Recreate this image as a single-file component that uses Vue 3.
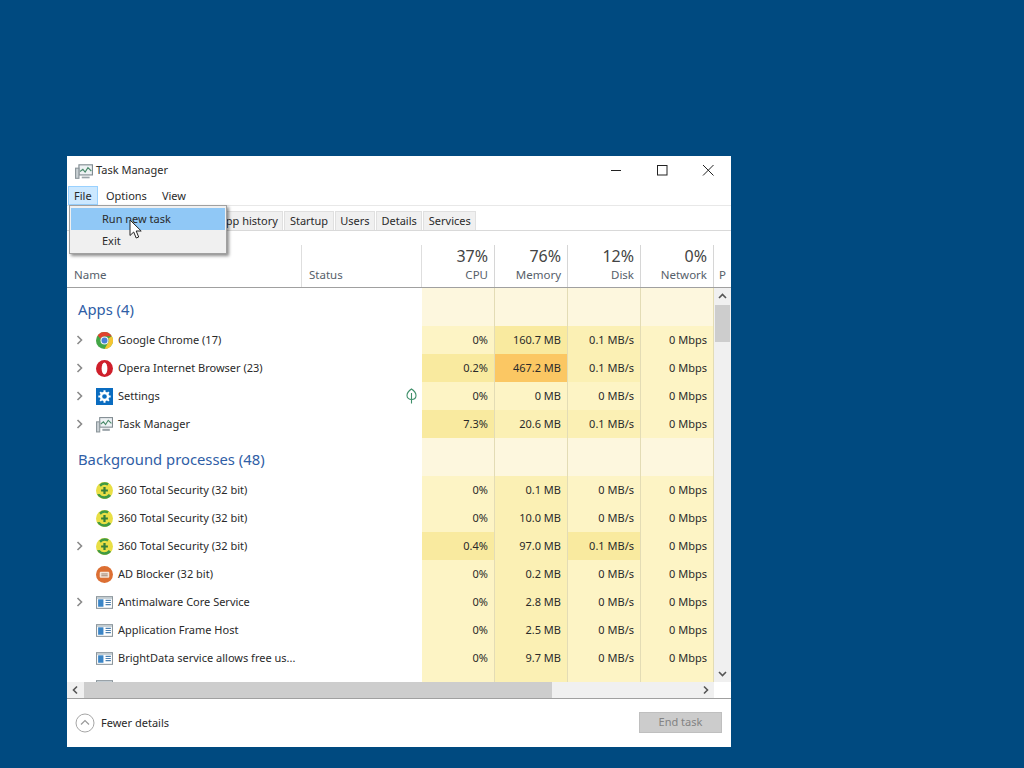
<script setup>
const tabs = ['Processes', 'Performance', 'App history', 'Startup', 'Users', 'Details', 'Services']
const heads = [
  { pct: '37%', label: 'CPU' },
  { pct: '76%', label: 'Memory' },
  { pct: '12%', label: 'Disk' },
  { pct: '0%', label: 'Network' },
]
const groups = [
  {
    title: 'Apps (4)',
    rows: [
      { name: 'Google Chrome (17)', icon: 'chrome', exp: true, cells: [['0%', 0], ['160.7 MB', 2], ['0.1 MB/s', 1], ['0 Mbps', 0]] },
      { name: 'Opera Internet Browser (23)', icon: 'opera', exp: true, cells: [['0.2%', 2], ['467.2 MB', 3], ['0.1 MB/s', 1], ['0 Mbps', 0]] },
      { name: 'Settings', icon: 'gear', exp: true, leaf: true, cells: [['0%', 0], ['0 MB', 0], ['0 MB/s', 0], ['0 Mbps', 0]] },
      { name: 'Task Manager', icon: 'tm', exp: true, cells: [['7.3%', 2], ['20.6 MB', 1], ['0.1 MB/s', 1], ['0 Mbps', 0]] },
    ],
  },
  {
    title: 'Background processes (48)',
    rows: [
      { name: '360 Total Security (32 bit)', icon: 's360', cells: [['0%', 0], ['0.1 MB', 1], ['0 MB/s', 0], ['0 Mbps', 0]] },
      { name: '360 Total Security (32 bit)', icon: 's360', cells: [['0%', 0], ['10.0 MB', 1], ['0 MB/s', 0], ['0 Mbps', 0]] },
      { name: '360 Total Security (32 bit)', icon: 's360', exp: true, cells: [['0.4%', 2], ['97.0 MB', 1], ['0.1 MB/s', 2], ['0 Mbps', 0]] },
      { name: 'AD Blocker (32 bit)', icon: 'ad', cells: [['0%', 0], ['0.2 MB', 1], ['0 MB/s', 0], ['0 Mbps', 0]] },
      { name: 'Antimalware Core Service', icon: 'win', exp: true, cells: [['0%', 0], ['2.8 MB', 1], ['0 MB/s', 0], ['0 Mbps', 0]] },
      { name: 'Application Frame Host', icon: 'win', cells: [['0%', 0], ['2.5 MB', 1], ['0 MB/s', 0], ['0 Mbps', 0]] },
      { name: 'BrightData service allows free us...', icon: 'win', cells: [['0%', 0], ['9.7 MB', 1], ['0 MB/s', 0], ['0 Mbps', 0]] },
      { name: '', icon: 'win', cells: [['', 0], ['', 1], ['', 0], ['', 0]] },
    ],
  },
]
</script>

<template>
  <div class="desktop">
    <div class="window">
      <div class="titlebar">
        <svg class="tm-title" width="18" height="16" viewBox="0 0 16 14">
          <rect x="3.500" y="1.500" width="12" height="9" fill="#eef2f4" stroke="#7f8a90" />
          <path d="M4.500 7.500l2.500-2 2 2.500 2.500-4 3 3" fill="none" stroke="#4a8a6a" />
          <rect x="0.500" y="4.500" width="3" height="9" fill="#c9d0d4" stroke="#8c969b" />
          <path d="M6 12h7v1.500H6z" fill="#9aa3a8" />
        </svg>
        <span class="title">Task Manager</span>
        <div class="caption">
          <svg width="46" height="30" viewBox="0 0 46 30"><path d="M18 14.500h10" stroke="#222" /></svg>
          <svg width="46" height="30" viewBox="0 0 46 30"><rect x="18.500" y="9.500" width="9.500" height="9.500" fill="none" stroke="#222" /></svg>
          <svg width="46" height="30" viewBox="0 0 46 30"><path d="M18 9l10.500 10.500M28.500 9L18 19.500" stroke="#222" fill="none" /></svg>
        </div>
      </div>

      <div class="menubar">
        <span class="menu active">File</span>
        <span class="menu">Options</span>
        <span class="menu">View</span>
      </div>

      <div class="tabs">
        <span v-for="t in tabs" :key="t" class="tab">{{ t }}</span>
      </div>

      <div class="head">
        <div class="hcell name"><span class="hlabel">Name</span></div>
        <div class="hcell status"><span class="hlabel">Status</span></div>
        <div v-for="h in heads" :key="h.label" class="hcell metric">
          <span class="pct">{{ h.pct }}</span>
          <span class="hlabel">{{ h.label }}</span>
        </div>
        <div class="hcell power"><span class="hlabel">P</span></div>
      </div>

      <div class="body">
        <div class="list">
          <div class="row spacer">
            <div></div>
            <div></div>
            <div v-for="i in 4" :key="i" class="cell hg"></div>
          </div>
          <template v-for="g in groups" :key="g.title">
            <div class="row group">
              <div class="gtitle">{{ g.title }}</div>
              <div class="status-cell"></div>
              <div v-for="i in 4" :key="i" class="cell hg"></div>
            </div>
            <div v-for="(r, ri) in g.rows" :key="ri" class="row">
              <div class="namecell">
                <svg v-if="r.exp" class="chev" width="7" height="10" viewBox="0 0 7 10"><path d="M1.500 1l4 4-4 4" fill="none" stroke="#8a8a8a" stroke-width="1.600" /></svg>
                <svg class="ico" width="17" height="17" viewBox="0 0 16 16">
                  <template v-if="r.icon === 'chrome'">
                    <circle cx="8" cy="8" r="8" fill="#43a647" />
                    <path d="M8 0a8 8 0 0 1 6.930 4H8a4 4 0 0 0-3.700 2.400L1.600 3.200A8 8 0 0 1 8 0z" fill="#e0432f" />
                    <path d="M14.930 4A8 8 0 0 1 8 16l3.400-5.900A4 4 0 0 0 11.500 6L14.930 4z" fill="#f6c531" />
                    <circle cx="8" cy="8" r="3.800" fill="#f4f4f4" />
                    <circle cx="8" cy="8" r="2.800" fill="#4a80d8" />
                  </template>
                  <template v-else-if="r.icon === 'opera'">
                    <circle cx="8" cy="8" r="8" fill="#cf1f2b" />
                    <ellipse cx="8" cy="8" rx="2.700" ry="5.600" fill="#fff" />
                  </template>
                  <template v-else-if="r.icon === 'gear'">
                    <rect width="16" height="16" fill="#0a6cc0" />
                    <circle cx="8" cy="8" r="3.300" fill="none" stroke="#fff" stroke-width="2.200" />
                    <path d="M8 2.200v2.500M8 11.300v2.500M2.200 8h2.500M11.300 8h2.500M3.900 3.900l1.700 1.700M10.400 10.400l1.700 1.700M12.100 3.900l-1.700 1.700M5.600 10.400l-1.700 1.700" stroke="#fff" stroke-width="1.900" />
                  </template>
                  <template v-else-if="r.icon === 'tm'">
                    <rect x="3.500" y="1.500" width="12" height="9" fill="#eef2f4" stroke="#7f8a90" />
                    <path d="M4.500 7.500l2.500-2 2 2.500 2.500-4 3 3" fill="none" stroke="#4a8a6a" />
                    <rect x="0.500" y="5.500" width="3" height="9.500" fill="#c9d0d4" stroke="#8c969b" />
                    <path d="M6 12h7v2H6z" fill="#9aa3a8" />
                  </template>
                  <template v-else-if="r.icon === 's360'">
                    <circle cx="8" cy="8" r="8" fill="#e9df45" />
                    <path d="M1 11.500a8 8 0 0 0 13.200 1.500L12 11.200a5.200 5.200 0 0 1-8.600 0z" fill="#3f9a45" />
                    <path d="M3 2.500A8 8 0 0 1 12 1.200L10.800 3.400A5 5 0 0 0 4.500 4.500z" fill="#3f9a45" />
                    <path d="M8 4.800v6.400M4.800 8h6.400" stroke="#357f39" stroke-width="2.100" />
                  </template>
                  <template v-else-if="r.icon === 'ad'">
                    <circle cx="8" cy="8" r="8" fill="#dc6f33" />
                    <rect x="3.500" y="5.500" width="9" height="5.500" rx="1" fill="#f3e4d8" />
                    <path d="M5 7.500h6M5 9.200h6" stroke="#9a8070" stroke-width="0.900" />
                  </template>
                  <template v-else>
                    <rect x="0.500" y="2.500" width="15" height="11" fill="#fff" stroke="#8b969c" />
                    <rect x="1" y="3" width="14" height="1.500" fill="#b9c4ca" />
                    <rect x="2" y="5" width="5" height="7" fill="#3b85c6" />
                    <path d="M9 6h5M9 8h5M9 10h5" stroke="#4a7fb0" />
                  </template>
                </svg>
                <span class="pname">{{ r.name }}</span>
              </div>
              <div class="status-cell">
                <svg v-if="r.leaf" class="leaf" width="11" height="16" viewBox="0 0 11 16"><path d="M5.500 1C8.500 3 10 5.500 10 7.500 10 10 8 11.500 5.500 11.500S1 10 1 7.500C1 5.500 2.500 3 5.500 1zM5.500 5v10.500" fill="none" stroke="#3f8f6a" stroke-width="1.100" /></svg>
              </div>
              <div v-for="(c, ci) in r.cells" :key="ci" class="cell" :class="'h' + c[1]">{{ c[0] }}</div>
            </div>
          </template>
        </div>
        <div class="vscroll">
          <svg width="17" height="17" viewBox="0 0 17 17"><path d="M5 10l3.500-3.500 3.500 3.500" fill="none" stroke="#555" stroke-width="1.600" /></svg>
          <div class="vthumb"></div>
          <div class="vspace"></div>
          <svg width="17" height="17" viewBox="0 0 17 17"><path d="M5 7l3.500 3.500 3.500-3.500" fill="none" stroke="#555" stroke-width="1.600" /></svg>
        </div>
      </div>

      <div class="hscroll">
        <svg width="17" height="16" viewBox="0 0 17 16"><path d="M10 4.500L6.500 8l3.500 3.500" fill="none" stroke="#555" stroke-width="1.600" /></svg>
        <div class="hthumb"></div>
        <div class="hspace"></div>
        <svg width="17" height="16" viewBox="0 0 17 16"><path d="M7 4.500L10.500 8 7 11.500" fill="none" stroke="#555" stroke-width="1.600" /></svg>
        <div class="hcorner"></div>
      </div>

      <div class="footer">
        <svg width="20" height="20" viewBox="0 0 20 20"><circle cx="10" cy="10" r="9" fill="none" stroke="#a6a6a6" /><path d="M6 11.500l4-4 4 4" fill="none" stroke="#9a9a9a" stroke-width="1.200" /></svg>
        <span class="fewer">Fewer details</span>
        <span class="endtask">End task</span>
      </div>

      <div class="dropdown">
        <div class="ditem on">Run new task</div>
        <div class="ditem">Exit</div>
      </div>
    </div>

    <svg class="cursor" width="14" height="21" viewBox="0 0 14 21"><path d="M1 1v15.500l3.700-3.500 2.500 6 2.500-1-2.500-6h5z" fill="#fff" stroke="#222" stroke-width="1" stroke-linejoin="round" /></svg>
  </div>
</template>

<style>
html, body { margin: 0; padding: 0; }
</style>

<style scoped>
.desktop {
  position: relative;
  width: 1024px;
  height: 768px;
  background: #004a80;
  overflow: hidden;
  font-family: "Noto Sans", "Open Sans", sans-serif;
  font-size: 11px;
  color: #2a2a2a;
}
.window {
  position: absolute;
  left: 67px;
  top: 156px;
  width: 664px;
  height: 591px;
  background: #fff;
  display: flex;
  flex-direction: column;
}
.titlebar {
  height: 30px;
  display: flex;
  align-items: center;
  padding-left: 8px;
  flex: none;
}
.tm-title { margin-right: 3px; }
.title { flex: 1; line-height: 28px; padding-bottom: 2px; }
.caption { display: flex; }
.caption svg { display: block; }
.menubar {
  height: 19px;
  display: flex;
  padding-left: 1px;
  flex: none;
}
.menu {
  padding: 0 6px 0 7px;
  line-height: 18px;
  box-sizing: border-box;
  border: 1px solid transparent;
}
.menu.active { background: #cce8ff; border-color: #99d1ff; padding: 0 0 0 5px; width: 30px; }
.tabs {
  height: 25px;
  display: flex;
  align-items: flex-end;
  padding-left: 4px;
  border-bottom: 1px solid #d9d9d9;
  box-shadow: inset 0 1px 0 #e8e8e8;
  flex: none;
}
.tab {
  height: 19px;
  line-height: 17px;
  padding: 0 4.500px;
  background: #f0f0f0;
  border: 1px solid #e0e0e0;
  border-bottom: 0;
  margin-right: 1px;
  box-sizing: border-box;
}
.head {
  height: 56px;
  display: grid;
  grid-template-columns: 235px 120px repeat(4, 73px) 17px;
  border-bottom: 1px solid #a0a0a0;
  flex: none;
  overflow: hidden;
}
.hcell {
  display: flex;
  flex-direction: column;
  justify-content: flex-end;
  padding: 0 6px 4px 7px;
  box-sizing: border-box;
  border-right: 1px solid #dedede;
  margin-top: 14px;
  white-space: nowrap;
}
.hcell.metric { align-items: flex-end; border-right: 1px solid #d6d6d6; }
.hcell.power { border-right: 0; padding-left: 5px; padding-right: 0; }
.hlabel { color: #56606a; line-height: 16px; font-size: 11.500px; }
.pct { font-size: 16px; line-height: 22px; color: #444; }
.body {
  height: 394px;
  flex: none;
  display: flex;
  overflow: hidden;
}
.list { width: 647px; flex: none; }
.row {
  display: grid;
  grid-template-columns: 235px 120px repeat(4, 73px);
  height: 28px;
}
.row.spacer { height: 8px; }
.row.group { height: 30px; }
.row + .row.group { height: 38px; }
.row.spacer + .row.group { height: 30px; }
.gtitle {
  font-size: 14.800px;
  color: #2f5ea6;
  padding-left: 11px;
  align-self: end;
  line-height: 27px;
  padding-bottom: 3px;
  white-space: nowrap;
}
.namecell {
  position: relative;
  display: flex;
  align-items: center;
  padding-left: 29px;
  white-space: nowrap;
}
.chev { position: absolute; left: 9px; top: 9px; }
.ico { flex: none; margin-right: 5px; }
.pname { line-height: 28px; }
.status-cell { display: flex; align-items: center; justify-content: flex-end; padding-right: 5px; }
.cell {
  line-height: 28px;
  text-align: right;
  padding-right: 6px;
  border-right: 1px solid #e3dcb5;
  box-sizing: border-box;
  white-space: nowrap;
}
.hg { background: #fdf7de; }
.h0 { background: #fdf4c5; }
.h1 { background: #fbf0b4; }
.h2 { background: #f9ea9f; }
.h3 { background: #fbc763; }
.vscroll {
  width: 17px;
  flex: none;
  background: #f0f0f0;
  display: flex;
  flex-direction: column;
}
.vscroll svg { display: block; flex: none; }
.vthumb { height: 37px; background: #cdcdcd; flex: none; margin: 0 1px; }
.vspace { flex: 1; }
.hscroll {
  height: 16px;
  flex: none;
  display: flex;
  background: #f0f0f0;
}
.hscroll svg { display: block; flex: none; }
.hthumb { width: 468px; background: #cdcdcd; flex: none; }
.hspace { flex: 1; }
.hcorner { width: 17px; background: #fff; flex: none; }
.footer {
  border-top: 1px solid #a0a0a0;
  display: flex;
  align-items: center;
  padding: 0 9px 1px 8px;
  box-sizing: border-box;
  flex: 1;
}
.fewer { margin-left: 6px; flex: 1; padding-bottom: 1px; }
.endtask {
  width: 83px;
  height: 21px;
  line-height: 18px;
  text-align: center;
  background: #cccccc;
  color: #838383;
  border: 1px solid #bfbfbf;
  box-sizing: border-box;
}
.dropdown {
  position: absolute;
  left: 2px;
  top: 49px;
  width: 158px;
  height: 49px;
  background: #f0f0f0;
  border: 1px solid #a0a0a0;
  box-sizing: border-box;
  box-shadow: 2px 2px 3px rgba(0, 0, 0, 0.45);
  padding: 2px 1px 0;
}
.ditem { height: 22px; line-height: 21px; padding-left: 31px; }
.ditem.on { background: #90c8f6; }
.cursor { position: absolute; left: 129px; top: 219px; }
</style>
